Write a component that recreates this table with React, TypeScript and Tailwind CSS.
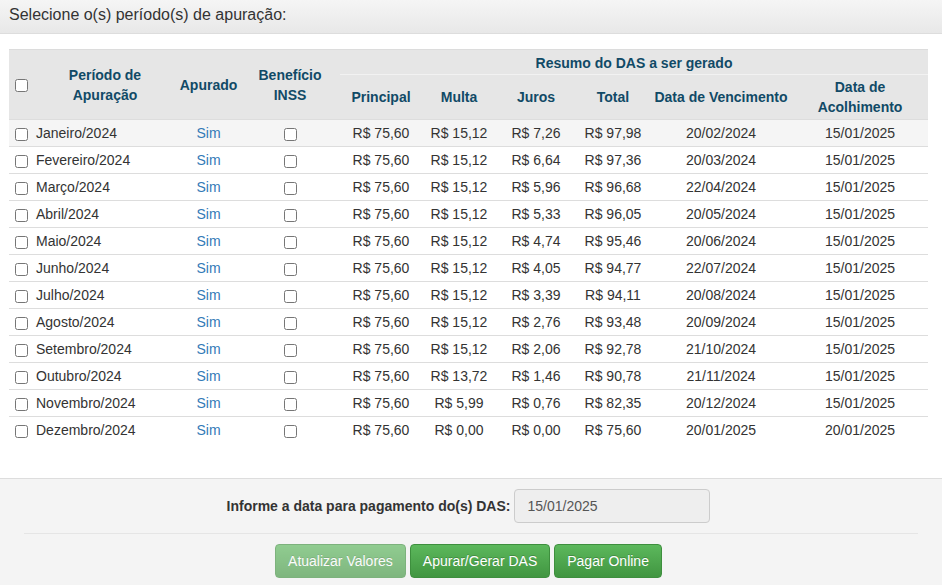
const rows = [
  { mes: "Janeiro/2024", multa: "R$ 15,12", juros: "R$ 7,26", total: "R$ 97,98", venc: "20/02/2024", acolh: "15/01/2025" },
  { mes: "Fevereiro/2024", multa: "R$ 15,12", juros: "R$ 6,64", total: "R$ 97,36", venc: "20/03/2024", acolh: "15/01/2025" },
  { mes: "Março/2024", multa: "R$ 15,12", juros: "R$ 5,96", total: "R$ 96,68", venc: "22/04/2024", acolh: "15/01/2025" },
  { mes: "Abril/2024", multa: "R$ 15,12", juros: "R$ 5,33", total: "R$ 96,05", venc: "20/05/2024", acolh: "15/01/2025" },
  { mes: "Maio/2024", multa: "R$ 15,12", juros: "R$ 4,74", total: "R$ 95,46", venc: "20/06/2024", acolh: "15/01/2025" },
  { mes: "Junho/2024", multa: "R$ 15,12", juros: "R$ 4,05", total: "R$ 94,77", venc: "22/07/2024", acolh: "15/01/2025" },
  { mes: "Julho/2024", multa: "R$ 15,12", juros: "R$ 3,39", total: "R$ 94,11", venc: "20/08/2024", acolh: "15/01/2025" },
  { mes: "Agosto/2024", multa: "R$ 15,12", juros: "R$ 2,76", total: "R$ 93,48", venc: "20/09/2024", acolh: "15/01/2025" },
  { mes: "Setembro/2024", multa: "R$ 15,12", juros: "R$ 2,06", total: "R$ 92,78", venc: "21/10/2024", acolh: "15/01/2025" },
  { mes: "Outubro/2024", multa: "R$ 13,72", juros: "R$ 1,46", total: "R$ 90,78", venc: "21/11/2024", acolh: "15/01/2025" },
  { mes: "Novembro/2024", multa: "R$ 5,99", juros: "R$ 0,76", total: "R$ 82,35", venc: "20/12/2024", acolh: "15/01/2025" },
  { mes: "Dezembro/2024", multa: "R$ 0,00", juros: "R$ 0,00", total: "R$ 75,60", venc: "20/01/2025", acolh: "20/01/2025" },
]

function Check() {
  return <input type="checkbox" className="m-0 h-[13px] w-[13px] align-middle" />
}

export default function App() {
  return (
    <div className="flex h-[585px] w-[942px] flex-col bg-white font-['Liberation_Sans',Arial,sans-serif] text-[14px] text-[#333]">
      <div className="h-[34px] border-b border-[#dddddd] bg-gradient-to-b from-[#f5f5f5] to-[#e8e8e8] px-[9px] text-[16px] leading-[30px]">
        Selecione o(s) período(s) de apuração:
      </div>

      <div className="flex-1 px-[9px] pt-[15px]">
        <table className="w-[919px] table-fixed border-collapse">
          <colgroup>
            <col className="w-[24px]" />
            <col className="w-[144px]" />
            <col className="w-[63px]" />
            <col className="w-[100px]" />
            <col className="w-[82px]" />
            <col className="w-[74px]" />
            <col className="w-[80px]" />
            <col className="w-[74px]" />
            <col className="w-[142px]" />
            <col className="w-[136px]" />
          </colgroup>
          <thead className="bg-[#e6e6e6] font-bold leading-[20px] text-[#114a66]">
            <tr className="h-[25px] border-t border-[#dcdcdc]">
              <th rowSpan={2} className="pl-[6px] text-left align-middle">
                <Check />
              </th>
              <th rowSpan={2} className="align-middle">Período de<br />Apuração</th>
              <th rowSpan={2} className="align-middle">Apurado</th>
              <th rowSpan={2} className="align-middle">Benefício<br />INSS</th>
              <th colSpan={6} className="border-b border-[#f2f2f2] pt-[1px] align-middle">Resumo do DAS a ser gerado</th>
            </tr>
            <tr className="h-[45px]">
              <th className="align-middle">Principal</th>
              <th className="align-middle">Multa</th>
              <th className="align-middle">Juros</th>
              <th className="align-middle">Total</th>
              <th className="align-middle">Data de Vencimento</th>
              <th className="align-middle">Data de<br />Acolhimento</th>
            </tr>
          </thead>
          <tbody className="leading-[20px]">
            {rows.map((r, i) => (
              <tr key={r.mes} className={`border-t border-[#dddddd] ${i === 0 ? "bg-[#f5f5f5]" : ""}`}>
                <td className="py-[3px] pl-[6px]">
                  <Check />
                </td>
                <td className="py-[3px] pl-[3px]">{r.mes}</td>
                <td className="py-[3px] text-center text-[#337ab7]">Sim</td>
                <td className="py-[3px] text-center">
                  <Check />
                </td>
                <td className="py-[3px] text-center">R$ 75,60</td>
                <td className="py-[3px] text-center">{r.multa}</td>
                <td className="py-[3px] text-center">{r.juros}</td>
                <td className="py-[3px] text-center">{r.total}</td>
                <td className="py-[3px] text-center">{r.venc}</td>
                <td className="py-[3px] text-center">{r.acolh}</td>
              </tr>
            ))}
          </tbody>
        </table>
      </div>

      <div className="h-[107px] border-t border-[#dddddd] bg-[#f4f4f4] px-[24px] pt-[10px]">
        <div className="flex items-center justify-center gap-[4px] pr-[5px]">
          <span className="font-bold">Informe a data para pagamento do(s) DAS:</span>
          <div className="h-[34px] w-[196px] rounded-[4px] border border-[#cccccc] bg-[#eeeeee] px-[12px] leading-[32px] text-[#555]">
            15/01/2025
          </div>
        </div>
        <div className="mt-[10px] border-t border-[#e5e5e5]" />
        <div className="mt-[10px] flex justify-center gap-[4px] pr-[5px]">
          <button className="h-[34px] rounded-[4px] border border-[#3e8f3e] bg-gradient-to-b from-[#5cb85c] to-[#419641] px-[12px] text-white opacity-65 [text-shadow:0_-1px_0_rgba(0,0,0,0.2)]">
            Atualizar Valores
          </button>
          <button className="h-[34px] rounded-[4px] border border-[#3e8f3e] bg-gradient-to-b from-[#5cb85c] to-[#419641] px-[12px] text-white [text-shadow:0_-1px_0_rgba(0,0,0,0.2)]">
            Apurar/Gerar DAS
          </button>
          <button className="h-[34px] rounded-[4px] border border-[#3e8f3e] bg-gradient-to-b from-[#5cb85c] to-[#419641] px-[12px] text-white [text-shadow:0_-1px_0_rgba(0,0,0,0.2)]">
            Pagar Online
          </button>
        </div>
      </div>
    </div>
  )
}
